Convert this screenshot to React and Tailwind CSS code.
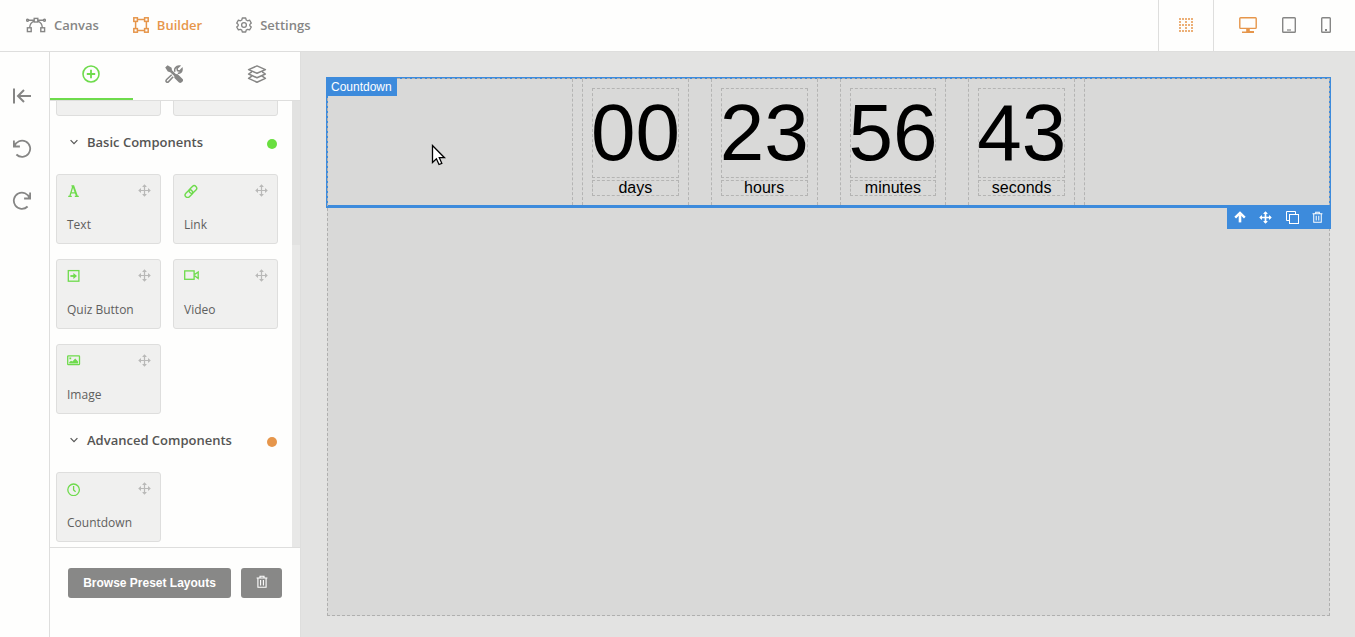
import { useState } from 'react';

const Svg = ({ size = 'w-4 h-4', box = '0 0 16 16', width = 1.5, children }) => (
  <svg className={`shrink-0 ${size}`} viewBox={box} fill="none" stroke="currentColor" strokeWidth={width} aria-hidden="true">
    {children}
  </svg>
);

// Top bar icons
const CurveIcon = () => (
  <Svg size="w-5 h-4" box="0 0 20 16" width={1.4}>
    <rect x="8.2" y="1.4" width="3.6" height="3.6" />
    <rect x="1.4" y="10.8" width="3.8" height="3.8" />
    <rect x="14.8" y="10.8" width="3.8" height="3.8" />
    <path d="M2.5 3.2H8M12 3.2h5.5M8 4.2C5.5 5.2 3.8 7.5 3.6 11M12 4.2c2.5 1 4.2 3.3 4.4 6.8" />
    <circle cx="1.6" cy="3.2" r="1" />
    <circle cx="18.4" cy="3.2" r="1" />
  </Svg>
);

const BuilderIcon = () => (
  <Svg width={1.5}>
    <rect x="0.8" y="0.8" width="3.6" height="3.6" />
    <rect x="11.6" y="0.8" width="3.6" height="3.6" />
    <rect x="0.8" y="11.6" width="3.6" height="3.6" />
    <rect x="11.6" y="11.6" width="3.6" height="3.6" />
    <path d="M4.4 2.6h7.2M4.4 13.4h7.2M2.6 4.4v7.2M13.4 4.4v7.2" />
  </Svg>
);

const GearIcon = () => (
  <Svg width={1.3}>
    <path strokeLinejoin="round" d="M6.3 1h3.4l.5 2 1.4.8 2-.6 1.7 2.9L13.8 7.4v1.4l1.5 1.2-1.7 2.9-2-.6-1.4.8-.5 1.9H6.3l-.5-1.9-1.4-.8-2 .6L.7 10l1.5-1.2V7.4L.7 6.1l1.7-2.9 2 .6L5.8 3z" />
    <circle cx="8" cy="8" r="2.4" />
  </Svg>
);

const GridIcon = () => (
  <Svg size="w-3.5 h-3.5" box="0 0 14 14" width={2}>
    <g strokeOpacity="0.75">
      <path strokeDasharray="2 1" d="M0 1h14M0 7h14M0 13h14" />
      <path strokeDasharray="2 4" d="M0 4h14M0 10h14" />
    </g>
  </Svg>
);

const DesktopIcon = () => (
  <Svg size="w-[18px] h-4" box="0 0 18 16" width={1.4}>
    <rect x="0.8" y="0.8" width="16.4" height="10.6" rx="0.8" />
    <path fill="currentColor" stroke="none" d="M7.2 12h3.6v2H15v2H3v-1.6h4.2z" />
  </Svg>
);

const TabletIcon = () => (
  <Svg size="w-3.5 h-4" box="0 0 14 16" width={1.4}>
    <rect x="0.7" y="0.7" width="12.6" height="14.6" rx="0.8" />
    <path strokeOpacity="0.6" strokeWidth="2" d="M5 13h4" />
  </Svg>
);

const PhoneIcon = () => (
  <Svg size="w-2.5 h-4" box="0 0 10 16" width={1.4}>
    <rect x="0.7" y="0.7" width="8.6" height="14.6" rx="0.8" />
    <path strokeWidth="2" d="M4 13h2" />
  </Svg>
);

// Rail icons
const CollapseIcon = () => (
  <Svg size="w-5 h-5" box="0 0 20 20" width={2}>
    <path d="M2 1.5v15M19 9H6.5M12 3 6 9l6 6" />
  </Svg>
);

const UndoIcon = () => (
  <Svg size="w-5 h-5" box="0 0 20 20" width={1.8}>
    <path d="M1.9 1.5v6h6M2.4 7.2a8.1 8.1 0 1 1 2 8.3" />
  </Svg>
);

const RedoIcon = () => (
  <Svg size="w-5 h-5" box="0 0 20 20" width={1.8}>
    <path d="M18.1 1.5v6h-6M17.6 7.2a8.1 8.1 0 1 0-2 8.3" />
  </Svg>
);

// Panel tab icons
const PlusIcon = () => (
  <Svg size="w-[18px] h-[18px]" box="0 0 18 18" width={1.6}>
    <circle cx="9" cy="9" r="8" />
    <path strokeWidth="1.8" d="M9 4.8v8.4M4.8 9h8.4" />
  </Svg>
);

const ToolsIcon = () => (
  <Svg size="w-[18px] h-[18px]" box="0 0 18 18" width={1.5}>
    <path fill="currentColor" stroke="none" d="M2.6.2 6.6 2.8 7 5.2 10.8 9 12.8 9.2 17.6 14Q18.6 15.2 17.6 16.4L16.4 17.6Q15.2 18.4 14 17.6L9.4 13 9.2 11 5.2 7.2 2.8 6.6.2 2.6z" />
    <path d="M10 6.8C8.8 3.6 11 .9 14.4 1.1L12 3.4l.5 2.2 2.2.5L17 3.7c.4 2.9-1.6 4.7-4.2 4.6M6.7 9.8l-5.3 5q-1 1.5.2 2.2 1 .6 2-.4l4.6-4.8" />
  </Svg>
);

const LayersIcon = () => (
  <Svg size="w-5 h-[18px]" box="0 0 20 18" width={1.5}>
    <path strokeLinejoin="round" d="M10 .9 18.4 4.6 10 8.3 1.6 4.6zM4.8 6.8 1.6 9 10 12.8 18.4 9l-3.2-2.2M4.8 11.2l-3.2 2.2L10 17.2l8.4-3.8-3.2-2.2" />
  </Svg>
);

// Component icons
const TextIcon = () => (
  <Svg size="w-3.5 h-3.5" box="0 0 14 14" width={1.3}>
    <path d="M1.2 12.4h3.6M7.8 12.4h4M4.4 1.8h2.4M2.8 12.4 6 1.8M3.8 8.8h5" />
    <path strokeWidth="1.8" d="M6.2 1.6l3.8 10.8" />
  </Svg>
);

const LinkIcon = () => (
  <Svg size="w-3.5 h-3.5" box="0 0 14 14" width={1.4}>
    <rect x="4.6" y="3" width="8.6" height="5" rx="2.5" transform="rotate(-45 8.9 5.5)" />
    <rect x="0.6" y="7.2" width="8.6" height="5" rx="2.5" transform="rotate(-45 4.9 9.7)" />
  </Svg>
);

const QuizIcon = () => (
  <Svg size="w-3.5 h-3.5" box="0 0 14 14" width={1.3}>
    <rect x="1.3" y="1.6" width="10.6" height="10.6" />
    <path d="M3.4 7H7" strokeWidth="1.8" />
    <path fill="currentColor" stroke="none" d="M6.4 4 10 7l-3.6 3z" />
  </Svg>
);

const VideoIcon = () => (
  <Svg size="w-4 h-3.5" box="0 0 16 14" width={1.3}>
    <rect x="0.7" y="1.9" width="9.4" height="8.4" />
    <path d="M10.1 5 11.2 5 14.2 3v6.4l-3-2.2h-1.1" />
  </Svg>
);

const ImageIcon = () => (
  <Svg size="w-3.5 h-3.5" box="0 0 14 14" width={1.3}>
    <rect x="0.7" y="1.9" width="11.8" height="8.8" rx="0.6" />
    <path fill="currentColor" stroke="none" d="M2.2 9.6V8.2l1.8-1.4 1.4.8 2.8-3 2.8 3v2zM2.4 3.4h1.8v1.8H2.4z" />
  </Svg>
);

const ClockIcon = () => (
  <Svg size="w-3.5 h-3.5" box="0 0 14 14" width={1.3}>
    <circle cx="6.6" cy="7.8" r="5.8" />
    <path d="M6.6 4v4l2 1.8" />
  </Svg>
);

const MoveIcon = ({ width = 1.2 }) => (
  <Svg size="w-[13px] h-[13px]" box="0 0 13 13" width={width}>
    <path d="M6.5 1v11M1 6.5h11" />
    <path fill="currentColor" stroke="none" d="M6.5.2 8.9 3H4.1zM6.5 12.8 8.9 10H4.1zM.2 6.5 3 4.1v4.8zM12.8 6.5 10 4.1v4.8z" />
  </Svg>
);

const TrashIcon = ({ size }) => (
  <Svg size={size} box="0 0 12 13" width={1.1}>
    <path d="M.6 3h10.8M4 3V1.2h4V3M1.9 3v9.2h8.2V3M4.6 5v5.4M7.4 5v5.4" />
  </Svg>
);

const UpIcon = () => (
  <Svg size="w-3 h-3" box="0 0 12 12" width={2.6}>
    <path d="M6 11.4V4" />
    <path d="M1.2 6.7 6 1.9l4.8 4.8" strokeWidth="2.4" />
  </Svg>
);

const CopyIcon = () => (
  <Svg size="w-[13px] h-[13px]" box="0 0 13 13" width={1}>
    <rect x="3.5" y="3.5" width="9" height="9" />
    <path d="M3.5 9.5h-3v-9h9v3" />
  </Svg>
);

const ChevronIcon = () => (
  <Svg size="w-2 h-2" box="0 0 8 8" width={1.2}>
    <path d="M.6 2.2 4 5.6l3.4-3.4" />
  </Svg>
);

const navItems = [
  { name: 'Canvas', icon: CurveIcon },
  { name: 'Builder', icon: BuilderIcon },
  { name: 'Settings', icon: GearIcon },
];

const railItems = [
  { name: 'Collapse panel', icon: CollapseIcon },
  { name: 'Undo', icon: UndoIcon },
  { name: 'Redo', icon: RedoIcon },
];

const panelTabs = [
  { name: 'Add', icon: PlusIcon },
  { name: 'Tools', icon: ToolsIcon },
  { name: 'Layers', icon: LayersIcon },
];

const devices = [
  { name: 'Desktop', icon: DesktopIcon },
  { name: 'Tablet', icon: TabletIcon },
  { name: 'Phone', icon: PhoneIcon },
];

const basicComponents = [
  { name: 'Text', icon: TextIcon },
  { name: 'Link', icon: LinkIcon },
  { name: 'Quiz Button', icon: QuizIcon },
  { name: 'Video', icon: VideoIcon },
  { name: 'Image', icon: ImageIcon },
];

const advancedComponents = [{ name: 'Countdown', icon: ClockIcon }];

const countdown = [
  { value: '00', unit: 'days' },
  { value: '23', unit: 'hours' },
  { value: '56', unit: 'minutes' },
  { value: '43', unit: 'seconds' },
];

function ComponentCard({ name, icon: Icon }) {
  return (
    <button className="flex h-[70px] flex-col justify-between rounded-[3px] border border-[#dededd] bg-[#f0f0ef] pt-[9px] pr-[9px] pb-2.5 pl-2.5 text-left">
      <span className="flex w-full items-start justify-between">
        <span className="flex text-[#6edb4c]"><Icon /></span>
        <span className="text-[#b9b9b8]"><MoveIcon /></span>
      </span>
      <span className="text-xs leading-4 text-[#5f5f5e]">{name}</span>
    </button>
  );
}

function Section({ title, dot, items }) {
  const [open, setOpen] = useState(true);

  return (
    <section>
      <button onClick={() => setOpen(!open)} className="flex h-[58px] w-full items-center pr-px pb-1.5 pl-3.5 text-[#555554]">
        <ChevronIcon />
        <span className="ml-[9px] text-[13px] leading-5 font-semibold">{title}</span>
        <span className={`mt-1 ml-auto h-2.5 w-2.5 rounded-full ${dot}`}></span>
      </button>
      {open && (
        <div className="grid grid-cols-2 gap-x-3 gap-y-[15px]">
          {items.map(item => <ComponentCard key={item.name} {...item} />)}
        </div>
      )}
    </section>
  );
}

function App() {
  const [page, setPage] = useState('Builder');
  const [tab, setTab] = useState('Add');
  const [device, setDevice] = useState('Desktop');

  return (
    <div className="flex h-screen flex-col bg-[#fefefd] font-['Open_Sans',sans-serif]">
      {/* Top bar */}
      <header className="flex h-[52px] shrink-0 justify-between border-b border-[#dededd]">
        <nav className="flex items-center gap-[34px] pb-px pl-[26px]">
          {navItems.map(({ name, icon: Icon }) => (
            <button
              key={name}
              onClick={() => setPage(name)}
              className={`flex items-center gap-2 text-[13px] leading-5 font-semibold ${page === name ? 'text-[#e6964b]' : 'text-[#868685]'}`}
            >
              <Icon />
              {name}
            </button>
          ))}
        </nav>
        <div className="flex text-[#868685]">
          <button aria-label="Toggle grid" className="flex w-14 items-center justify-center border-x border-[#dededd] pb-px text-[#e6964b]">
            <GridIcon />
          </button>
          <div className="flex items-center gap-[25px] pr-6 pb-px pl-[25px]">
            {devices.map(({ name, icon: Icon }) => (
              <button key={name} aria-label={name} onClick={() => setDevice(name)} className={device === name ? 'text-[#e6964b]' : ''}>
                <Icon />
              </button>
            ))}
          </div>
        </div>
      </header>

      <div className="flex min-h-0 flex-1">
        {/* Left rail */}
        <div className="flex w-[50px] shrink-0 flex-col items-center gap-8 border-r border-[#dededd] pt-[35px] pr-[5px] text-[#868685]">
          {railItems.map(({ name, icon: Icon }) => (
            <button key={name} aria-label={name}><Icon /></button>
          ))}
        </div>

        {/* Components panel */}
        <aside className="flex w-[251px] shrink-0 flex-col border-r border-[#dededd]">
          <div className="flex h-[49px] shrink-0 border-b border-[#dededd] text-[#868685]">
            {panelTabs.map(({ name, icon: Icon }) => (
              <button
                key={name}
                aria-label={name}
                onClick={() => setTab(name)}
                className={`flex flex-1 items-center justify-center border-b-2 pr-0.5 pb-0.5 ${tab === name ? 'border-[#6edb4c] text-[#6edb4c]' : 'border-transparent'}`}
              >
                <Icon />
              </button>
            ))}
          </div>

          <div className="flex min-h-0 flex-1 overflow-hidden">
            <div className="flex flex-1 flex-col justify-end pr-3.5 pb-[5px] pl-1.5">
              <div className="grid shrink-0 grid-cols-2 gap-x-3">
                <div className="h-[70px] rounded-[3px] border border-[#dededd] bg-[#f0f0ef]"></div>
                <div className="h-[70px] rounded-[3px] border border-[#dededd] bg-[#f0f0ef]"></div>
              </div>
              <Section title="Basic Components" dot="bg-[#69df3f]" items={basicComponents} />
              <Section title="Advanced Components" dot="bg-[#e6964b]" items={advancedComponents} />
            </div>
            <div className="w-2 bg-[#e8e8e7]">
              <div className="h-36 bg-[#e2e2e1]"></div>
            </div>
          </div>

          <div className="flex h-[90px] shrink-0 items-start gap-2.5 border-t border-[#dededd] px-[18px] pt-5 font-['Liberation_Sans',sans-serif] text-white">
            <button className="h-[30px] flex-1 rounded-[3px] bg-[#888887] text-xs font-bold">Browse Preset Layouts</button>
            <button aria-label="Delete all" className="flex h-[30px] w-[41px] items-center justify-center rounded-[3px] bg-[#888887] pb-[3px]">
              <TrashIcon size="w-3 h-[13px]" />
            </button>
          </div>
        </aside>

        {/* Canvas */}
        <main className="flex min-w-0 flex-1 bg-[#e3e3e2] pt-[26px] pr-[25px] pb-[21px] pl-[26px] font-['Liberation_Sans',sans-serif]">
          <div className="relative flex-1 bg-[#d9d9d8]">
            <div className="relative -mx-px -mt-px flex justify-center border-2 border-b-[3px] border-[#3d8bdc]">
              <div className="flex w-[513px] gap-[22px] border-x border-dashed border-[#b4b4b3] px-[9px]">
                {countdown.map(({ value, unit }) => (
                  <div key={unit} className="flex min-w-0 flex-1 flex-col gap-0.5 border-x border-dashed border-[#b4b4b3] p-[9px] text-black">
                    <div className="flex h-[90px] items-center justify-center border border-dashed border-[#b4b4b3] text-[80px] leading-none">
                      <span>{value}</span>
                    </div>
                    <div className="flex h-4 items-center justify-center border border-dashed border-[#b4b4b3] text-base leading-none">{unit}</div>
                  </div>
                ))}
              </div>

              <span className="absolute -top-0.5 -left-0.5 z-10 h-[19px] bg-[#3d8bdc] px-[5px] text-xs leading-5 text-white">Countdown</span>

              <div className="absolute top-full -right-0.5 z-10 flex h-6 w-[104px] items-center justify-between bg-[#3d8bdc] pr-2 pl-[7px] text-white">
                <button aria-label="Select parent"><UpIcon /></button>
                <button aria-label="Move"><MoveIcon width={1.7} /></button>
                <button aria-label="Duplicate"><CopyIcon /></button>
                <button aria-label="Delete"><TrashIcon size="w-[11px] h-3" /></button>
              </div>

              {/* Pointer */}
              <svg className="absolute top-[65px] left-[103px] h-[23px] w-[15px]" viewBox="0 0 15 23" aria-hidden="true">
                <path d="M1.5 1.5v17l3.9-3.7 2.6 5.7 2.8-1.2-2.5-5.6h5.2z" fill="#fff" stroke="#000" strokeWidth="1.3" />
              </svg>
            </div>
            <div className="pointer-events-none absolute inset-0 border border-dashed border-[#b0b0af]"></div>
          </div>
        </main>
      </div>
    </div>
  );
}

export default App;
